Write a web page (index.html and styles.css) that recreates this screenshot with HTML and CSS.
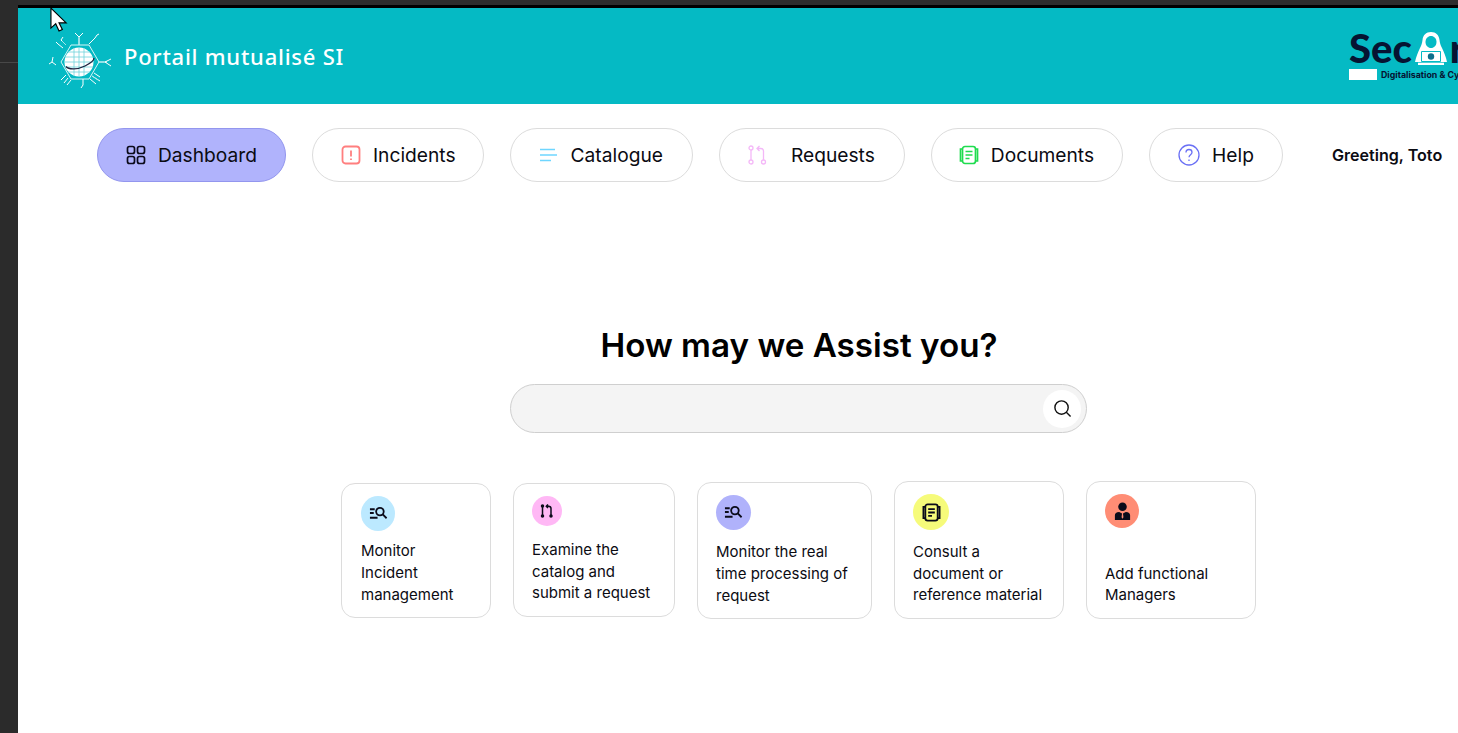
FILE: index.html
```html
<!DOCTYPE html>
<html lang="en">
<head>
    <meta charset="UTF-8">
    <meta name="viewport" content="width=device-width, initial-scale=1.0">
    <title>Portail mutualisé SI</title>
    <link rel="stylesheet" href="styles.css">
</head>
<body>

    <div class="frame">
        <div class="side-strip">
            <div class="side-line"></div>
        </div>
        <div class="page">
            <div class="top-strip"></div>

            <header class="header">
                <div class="brand">
                    <svg class="brand-logo" viewBox="47 25 68 62" fill="none">
                        <path d="M61 57l10-17h18l10 17-10 17H71z" stroke="#d8f5f7" stroke-width="1"/>
                        <circle cx="79" cy="57" r="14.500" fill="#fff"/>
                        <path d="M65 52h28M65 57h28M65 62h28M68 47h22M68 67h22M74 43v28M79 42.500v29M84 43v28" stroke="#6fd3dc" stroke-width=".8"/>
                        <path d="M66 61.500c3 3.500 12 3 19-.5 6-3 9-6 9-8" stroke="#1d2340" stroke-width="1.300"/>
                        <path d="M79 40V32M79 32l-4-4M79 32l4-4M89 39l6-6 2-3 2-1M98 57h9M105 57l6-3M105 57l6 4M90 74l6 5M92 71l8 5M94 68l6 4M83 74v6l-2 3M71 75l-4 5M68 73l-4 5M66 70l-5 5M66 40l-5-5M63 43l-5-4M61 35l2-3M58 39l-2-2M53 52l-1 5M52 57l-3 2M52 57l4 3" stroke="#fff" stroke-width="1"/>
                        <path d="M79 40V33M98 57h6M92 71l6 4M66 40l-4-4" stroke="#a5e6ea" stroke-width="1"/>
                    </svg>
                    <span class="brand-name">Portail mutualisé SI</span>
                </div>
                <div class="secure">
                    <div class="secure-word">
                        <span>Sec</span>
                        <svg class="secure-hood" viewBox="0 0 32 33">
                            <path d="M16 0c-5 0-8 3-8.500 8-.3 3-1 5-2.500 8-2 4-4 9-5 14h3v3h26v-3h3c-1-5-3-10-5-14-1.500-3-2.200-5-2.500-8C24 3 21 0 16 0z" fill="#fff"/>
                            <path d="M16 4c-3 0-5.500 2.500-5.500 6S13 16 16 16s5.500-2.500 5.500-6S19 4 16 4z" fill="#05bac4"/>
                            <path d="M6.500 19.500h19v10h-19z" fill="#fff" stroke="#05bac4" stroke-width="1"/>
                            <path d="M3 30.500h26" stroke="#05bac4" stroke-width=".7"/>
                            <circle cx="16" cy="24.500" r="3.200" fill="#0e6f8c"/>
                        </svg>
                        <span class="secure-end">re</span>
                    </div>
                    <div class="secure-tag">
                        <span class="secure-box"></span>
                        <span class="secure-text">Digitalisation &amp; Cybersécurité</span>
                    </div>
                </div>
            </header>

            <nav class="nav">
                <a class="pill pill-active">
                    <svg class="pill-icon" viewBox="0 0 20 20" fill="none" stroke="#0b0b1a" stroke-width="1.700">
                        <rect x="1.500" y="1.500" width="7" height="7" rx="2"/>
                        <rect x="11.500" y="1.500" width="7" height="7" rx="2"/>
                        <rect x="1.500" y="11.500" width="7" height="7" rx="2"/>
                        <rect x="11.500" y="11.500" width="7" height="7" rx="2"/>
                    </svg>
                    Dashboard
                </a>
                <a class="pill pill-incidents">
                    <svg class="pill-icon" viewBox="0 0 20 20" fill="none" stroke="#ff7f7f" stroke-width="1.800">
                        <rect x="1.500" y="1.500" width="17" height="17" rx="3"/>
                        <path d="M10 5.500v6M10 13.500v1.500"/>
                    </svg>
                    Incidents
                </a>
                <a class="pill pill-catalogue">
                    <svg class="pill-icon" viewBox="0 0 20 20" fill="none" stroke="#6fd6ff" stroke-width="1.700">
                        <path d="M1 4.500h15M1 10h17M1 15.500h11"/>
                    </svg>
                    Catalogue
                </a>
                <a class="pill pill-requests">
                    <svg class="pill-icon" viewBox="0 0 20 20" fill="none" stroke="#f4b8f8" stroke-width="1.300">
                        <circle cx="3" cy="3" r="2"/>
                        <circle cx="3" cy="17" r="2"/>
                        <circle cx="15.500" cy="17" r="2"/>
                        <path d="M3 5v10M15.500 15V6c0-1.500-1-2.500-2.500-2.500H9M11.500 1L9 3.500 11.500 6"/>
                    </svg>
                    Requests
                </a>
                <a class="pill pill-documents">
                    <svg class="pill-icon" viewBox="0 0 20 20" fill="none" stroke="#1fdc4f" stroke-width="1.700">
                        <rect x="3.500" y="1.500" width="13" height="17" rx="2.500"/>
                        <path d="M3.500 4H1.500v12h2M16.500 4h2v12h-2M6.500 6.500h7M6.500 10h7M6.500 13.500h4"/>
                    </svg>
                    Documents
                </a>
                <a class="pill pill-help">
                    <svg class="pill-icon" viewBox="0 0 22 22" fill="none" stroke="#6a70f5" stroke-width="1.300">
                        <circle cx="11" cy="11" r="10"/>
                        <path d="M8 8.500c0-2 1.300-3 3-3s3 1.200 3 2.800c0 2.400-3 2.400-3 5M11 15.500v1.500"/>
                    </svg>
                    Help
                </a>
                <span class="greeting">Greeting, Toto</span>
            </nav>

            <main class="main">
                <h1 class="title">How may we Assist you?</h1>
                <div class="search">
                    <button class="search-btn">
                        <svg viewBox="0 0 20 20" fill="none" stroke="#111" stroke-width="1.500">
                            <circle cx="9" cy="9" r="7"/>
                            <path d="M14 14l4.500 4.500"/>
                        </svg>
                    </button>
                </div>
                <div class="cards">
                    <div class="card card-1">
                        <span class="badge badge-blue">
                            <svg viewBox="0 0 20 20" fill="none" stroke="#0b0b1a" stroke-width="1.900">
                                <path d="M1 5.500h5M1 9.500h4M1 14.500h8"/>
                                <circle cx="11.500" cy="8" r="4"/>
                                <path d="M14.500 11l4 4"/>
                            </svg>
                        </span>
                        <p class="card-text">Monitor<br>Incident<br>management</p>
                    </div>
                    <div class="card card-2">
                        <span class="badge badge-pink">
                            <svg viewBox="0 0 14 14" fill="#0b0b1a" stroke="#0b0b1a" stroke-width="1.500">
                                <circle cx="2.500" cy="2" r="1"/>
                                <circle cx="2.500" cy="12" r="1"/>
                                <circle cx="11" cy="12" r="1"/>
                                <path fill="none" d="M2.500 3v8M11 11V4.500C11 3 10 2.200 8.500 2.200H6.500M8 .5L6.300 2.200 8 4"/>
                            </svg>
                        </span>
                        <p class="card-text">Examine the<br>catalog and<br>submit a request</p>
                    </div>
                    <div class="card card-3">
                        <span class="badge badge-violet">
                            <svg viewBox="0 0 20 20" fill="none" stroke="#0b0b1a" stroke-width="1.900">
                                <path d="M1 5.500h5M1 9.500h4M1 14.500h8"/>
                                <circle cx="11.500" cy="8" r="4"/>
                                <path d="M14.500 11l4 4"/>
                            </svg>
                        </span>
                        <p class="card-text">Monitor the real<br>time processing of<br>request</p>
                    </div>
                    <div class="card card-4">
                        <span class="badge badge-yellow">
                            <svg viewBox="0 0 20 20" fill="none" stroke="#0b0b1a" stroke-width="1.900">
                                <rect x="3.500" y="1.500" width="13" height="17" rx="2.500"/>
                                <path d="M3.500 4H1.500v12h2M16.500 4h2v12h-2M6.500 6.500h7M6.500 10h7M6.500 13.500h4"/>
                            </svg>
                        </span>
                        <p class="card-text">Consult a<br>document or<br>reference material</p>
                    </div>
                    <div class="card card-5">
                        <span class="badge badge-red">
                            <svg viewBox="0 0 20 20" fill="#0b0b1a">
                                <circle cx="10" cy="5" r="4.500"/>
                                <path d="M2 19v-5c0-2 1.500-3.200 4.500-3.500L9.500 12 9 16l1 1.500L11 16l-.5-4 3-1.500c3 .3 4.500 1.500 4.500 3.500v5z"/>
                            </svg>
                        </span>
                        <p class="card-text">Add functional<br>Managers</p>
                    </div>
                </div>
            </main>

        </div>
    </div>

    <svg class="cursor" viewBox="0 0 20 27">
        <path d="M1 1v21l5-4.500 3.500 7.500 3.500-1.500-3.500-7H17z" fill="#fff" stroke="#000" stroke-width="1.200"/>
    </svg>

</body>
</html>
```

FILE: styles.css
```css
html, body {
    height: 100%;
}

body {
    font-family: Inter, "Liberation Sans", sans-serif;
    margin: 0;
    background-color: #fff;
    color: #0b0b12;
    overflow: hidden;
}

.cursor {
    position: absolute;
    left: 50px;
    top: 7px;
    width: 19px;
    height: 26px;
}

.frame {
    display: flex;
    height: 733px;
}

.side-strip {
    flex: 0 0 18px;
    background-color: #2b2b2b;
    padding-top: 62px;
    box-sizing: border-box;
}

.side-line {
    height: 1px;
    background-color: #484848;
}

.page {
    flex: 1;
    min-width: 0;
    overflow: hidden;
}

.top-strip {
    height: 5px;
    background-color: #2d2d2d;
    border-bottom: 3px solid #000;
}

.header {
    display: flex;
    height: 96px;
    background-color: #05bac4;
}

.brand {
    flex: 0 0 1331px;
    display: flex;
    align-items: center;
    gap: 9px;
    padding: 0 0 0 29px;
    box-sizing: border-box;
}

.brand-logo {
    flex: none;
    width: 68px;
    height: 62px;
    margin-top: 9px;
}

.brand-name {
    font-family: "Noto Sans", sans-serif;
    font-size: 22px;
    font-weight: 500;
    letter-spacing: .75px;
    color: #fff;
    white-space: nowrap;
}

.secure {
    flex: none;
    padding-top: 24px;
}

.secure-word {
    display: flex;
    align-items: flex-end;
    height: 33px;
    font-family: Lato, sans-serif;
    font-size: 40px;
    font-weight: 900;
    line-height: 33px;
    color: #061432;
}

.secure-hood {
    width: 32px;
    height: 33px;
    margin: 0 3px 0 3px;
}

.secure-tag {
    display: flex;
    align-items: center;
    gap: 4px;
    margin-top: 4px;
}

.secure-box {
    width: 28px;
    height: 11px;
    background-color: #fff;
}

.secure-text {
    font-size: 8.800px;
    font-weight: 700;
    color: #061432;
    white-space: nowrap;
}

.nav {
    display: flex;
    align-items: center;
    gap: 26px;
    padding: 24px 0 0 79px;
}

.pill {
    flex: none;
    display: flex;
    align-items: center;
    gap: 12px;
    height: 54px;
    box-sizing: border-box;
    padding: 0 28px;
    border: 1px solid #dcdcdc;
    border-radius: 27px;
    font-size: 19.200px;
    white-space: nowrap;
}

.pill-active {
    background-color: #b0b3fc;
    border-color: #9396ee;
}

.pill-incidents {
    padding-right: 27px;
}

.pill-catalogue {
    padding-right: 29px;
}

.pill-requests {
    gap: 23px;
    padding-right: 29px;
}

.pill-documents {
    padding-left: 27px;
}

.pill-help .pill-icon {
    width: 22px;
    height: 22px;
}

.pill-icon {
    flex: none;
    width: 20px;
    height: 20px;
}

.greeting {
    flex: none;
    margin-left: 23px;
    font-size: 16.100px;
    font-weight: 600;
    white-space: nowrap;
}

.main {
    display: flex;
    flex-direction: column;
}

.title {
    margin: 143px 0 0 0;
    text-align: center;
    width: 1562px;
    font-size: 33.200px;
    font-weight: 600;
    line-height: 40px;
    color: #000;
}

.search {
    display: flex;
    justify-content: flex-end;
    align-items: center;
    width: 577px;
    height: 49px;
    box-sizing: border-box;
    margin: 19px 0 0 492px;
    padding-right: 5px;
    background-color: #f4f4f4;
    border: 1px solid #cfcfcf;
    border-radius: 25px;
}

.search-btn {
    display: flex;
    align-items: center;
    justify-content: center;
    width: 38px;
    height: 38px;
    padding: 0;
    border: none;
    border-radius: 50%;
    background-color: #fff;
}

.search-btn svg {
    width: 19px;
    height: 19px;
}

.cards {
    display: flex;
    align-items: center;
    gap: 22px;
    margin: 48px 0 0 323px;
}

.card {
    flex: none;
    display: flex;
    flex-direction: column;
    align-items: flex-start;
    box-sizing: border-box;
    border: 1px solid #dcdcdc;
    border-radius: 14px;
    padding: 12px 10px 12px 18px;
    background-color: #fff;
}

.card-1 { width: 150px; height: 135px; padding-left: 19px; padding-bottom: 11px; }
.card-2 { width: 162px; height: 134px; }
.card-3 { width: 175px; height: 137px; padding-bottom: 11px; }
.card-4 { width: 170px; height: 138px; }
.card-5 { width: 170px; height: 138px; }

.badge {
    flex: none;
    display: flex;
    align-items: center;
    justify-content: center;
    width: 35px;
    height: 35px;
    border-radius: 50%;
}

.badge svg {
    width: 19px;
    height: 19px;
}

.badge-blue { background-color: #bce9ff; width: 34px; }
.badge-pink { background-color: #ffb8f5; width: 30px; height: 30px; }
.badge-pink svg { width: 14px; height: 14px; }
.badge-violet { background-color: #b0b2fb; }
.badge-yellow { background-color: #f6fb7a; width: 36px; height: 36px; }
.badge-red { background-color: #ff8d75; width: 34px; height: 34px; }

.card-text {
    margin: auto 0 0 0;
    font-size: 15px;
    line-height: 21.700px;
    white-space: nowrap;
}
```
